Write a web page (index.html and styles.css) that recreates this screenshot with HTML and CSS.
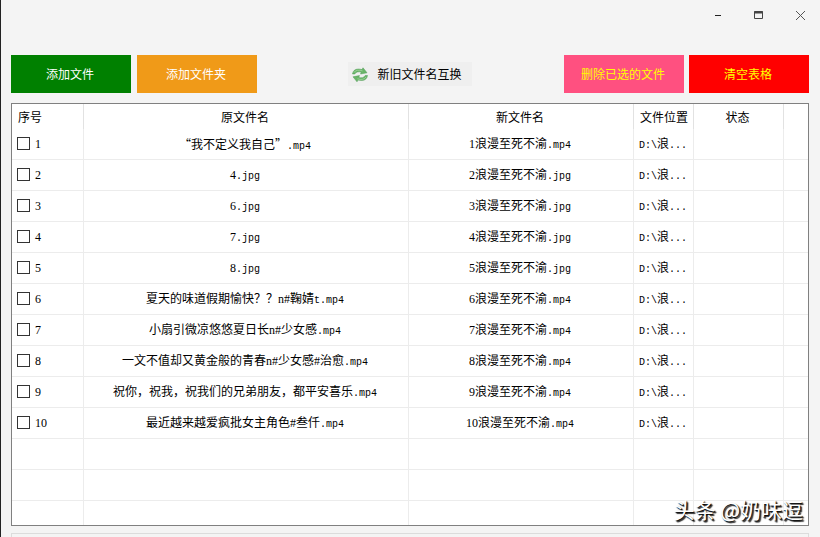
FILE: index.html
```html
<!DOCTYPE html>
<html lang="zh-CN">
<head>
    <meta charset="UTF-8">
    <meta name="viewport" content="width=device-width, initial-scale=1.0">
    <title>文件改名</title>
    <link rel="stylesheet" href="styles.css">
</head>
<body>
    <header class="titlebar">
        <button class="titlebar__boton" aria-label="最小化">
            <svg width="12" height="12" viewBox="0 0 12 12"><path d="M3 5.5h6" stroke="#222" fill="none"/></svg>
        </button>
        <button class="titlebar__boton" aria-label="最大化">
            <svg width="12" height="12" viewBox="0 0 12 12"><path d="M1.500 1.500h8v7h-8z" stroke="#444" fill="none"/><path d="M1 2.500h9" stroke="#444" stroke-width="2"/></svg>
        </button>
        <button class="titlebar__boton" aria-label="关闭">
            <svg width="12" height="12" viewBox="0 0 12 12"><path d="M2 1l9 9M11 1l-9 9" stroke="#555" fill="none"/></svg>
        </button>
    </header>
    <main class="contenido">
        <nav class="toolbar">
            <div class="toolbar__grupo">
                <button class="boton boton--verde">添加文件</button>
                <button class="boton boton--naranja">添加文件夹</button>
            </div>
            <button class="swap">
                <svg width="18" height="16" viewBox="0 0 18 16">
                    <g fill="#69b568" stroke="#4f9a55" stroke-width="0.5" stroke-linejoin="round">
                        <path d="M1.500 7C2 3 5.500 1 11 2.600L12 .8L16 5.800L9.500 7L10.300 5.200C7.500 4.300 5 4.800 3.800 7z"/>
                        <path d="M16.500 8.500C16 12.500 12.500 14.500 7 13L6 14.800L2 9.800L8.500 8.600L7.700 10.400C10.500 11.300 13 10.800 14.200 8.500z"/>
                    </g>
                    <path d="M3 5.500C4.500 3 8 2.600 11.500 3.900M15 10C13.500 12.600 10 13 6.500 11.800" stroke="#a4d6a0" stroke-width="0.8" fill="none"/>
                </svg>
                新旧文件名互换
            </button>
            <div class="toolbar__grupo toolbar__grupo--derecha">
                <button class="boton boton--rosa">删除已选的文件</button>
                <button class="boton boton--rojo">清空表格</button>
            </div>
        </nav>
        <table class="tabla">
            <colgroup>
                <col class="col-num">
                <col>
                <col class="col-nuevo">
                <col class="col-ruta">
                <col class="col-estado">
                <col class="col-resto">
            </colgroup>
            <thead>
                <tr><th class="izq">序号</th><th>原文件名</th><th>新文件名</th><th class="izq">文件位置</th><th>状态</th><th></th></tr>
            </thead>
            <tbody>
                <tr><td><label class="fila"><input type="checkbox">1</label></td><td><span class="comilla">“</span>我不定义我自己<span class="comilla">”</span><span class="mono">.mp4</span></td><td>1浪漫至死不渝<span class="mono">.mp4</span></td><td class="ruta"><span class="mono">D:\</span>浪<span class="mono">...</span></td><td></td><td></td></tr>
                <tr><td><label class="fila"><input type="checkbox">2</label></td><td>4<span class="mono">.jpg</span></td><td>2浪漫至死不渝<span class="mono">.jpg</span></td><td class="ruta"><span class="mono">D:\</span>浪<span class="mono">...</span></td><td></td><td></td></tr>
                <tr><td><label class="fila"><input type="checkbox">3</label></td><td>6<span class="mono">.jpg</span></td><td>3浪漫至死不渝<span class="mono">.jpg</span></td><td class="ruta"><span class="mono">D:\</span>浪<span class="mono">...</span></td><td></td><td></td></tr>
                <tr><td><label class="fila"><input type="checkbox">4</label></td><td>7<span class="mono">.jpg</span></td><td>4浪漫至死不渝<span class="mono">.jpg</span></td><td class="ruta"><span class="mono">D:\</span>浪<span class="mono">...</span></td><td></td><td></td></tr>
                <tr><td><label class="fila"><input type="checkbox">5</label></td><td>8<span class="mono">.jpg</span></td><td>5浪漫至死不渝<span class="mono">.jpg</span></td><td class="ruta"><span class="mono">D:\</span>浪<span class="mono">...</span></td><td></td><td></td></tr>
                <tr><td><label class="fila"><input type="checkbox">6</label></td><td>夏天的味道假期愉快？？n#鞠婧<span class="mono">t.mp4</span></td><td>6浪漫至死不渝<span class="mono">.mp4</span></td><td class="ruta"><span class="mono">D:\</span>浪<span class="mono">...</span></td><td></td><td></td></tr>
                <tr><td><label class="fila"><input type="checkbox">7</label></td><td>小扇引微凉悠悠夏日长n#少女感<span class="mono">.mp4</span></td><td>7浪漫至死不渝<span class="mono">.mp4</span></td><td class="ruta"><span class="mono">D:\</span>浪<span class="mono">...</span></td><td></td><td></td></tr>
                <tr><td><label class="fila"><input type="checkbox">8</label></td><td>一文不值却又黄金般的青春n#少女感#治愈<span class="mono">.mp4</span></td><td>8浪漫至死不渝<span class="mono">.mp4</span></td><td class="ruta"><span class="mono">D:\</span>浪<span class="mono">...</span></td><td></td><td></td></tr>
                <tr><td><label class="fila"><input type="checkbox">9</label></td><td>祝你，祝我，祝我们的兄弟朋友，都平安喜乐<span class="mono">.mp4</span></td><td>9浪漫至死不渝<span class="mono">.mp4</span></td><td class="ruta"><span class="mono">D:\</span>浪<span class="mono">...</span></td><td></td><td></td></tr>
                <tr><td><label class="fila"><input type="checkbox">10</label></td><td>最近越来越爱疯批女主角色#叁仟<span class="mono">.mp4</span></td><td>10浪漫至死不渝<span class="mono">.mp4</span></td><td class="ruta"><span class="mono">D:\</span>浪<span class="mono">...</span></td><td></td><td></td></tr>
                <tr><td></td><td></td><td></td><td></td><td></td><td></td></tr>
                <tr><td></td><td></td><td></td><td></td><td></td><td></td></tr>
                <tr class="ultima"><td></td><td></td><td></td><td></td><td></td><td></td></tr>
            </tbody>
        </table>
        <section class="panel"></section>
    </main>
    <div class="marca">头条 @奶味逗</div>
</body>
</html>
```
FILE: styles.css
```css
* {
    box-sizing: border-box;
}
body {
    margin: 0;
    height: 100vh;
    overflow: hidden;
    position: relative;
    display: flex;
    flex-direction: column;
    background-color: #f4f4f4;
    border-left: 1px solid #222;
    font-family: "Liberation Serif", "Noto Sans CJK SC", serif;
    font-size: 12px;
    line-height: 18px;
    color: #000;
}
button {
    font: inherit;
    border: none;
    padding: 0;
    cursor: pointer;
}
.titlebar {
    display: flex;
    justify-content: flex-end;
    height: 31px;
}
.titlebar__boton {
    width: 41px;
    background: none;
    display: flex;
    align-items: center;
    justify-content: center;
}
.contenido {
    flex: 1;
    display: flex;
    flex-direction: column;
    padding: 24px 11px 0 10px;
}
.toolbar {
    display: grid;
    grid-template-columns: 1fr auto 1fr;
    align-items: center;
    margin-bottom: 10px;
}
.toolbar__grupo {
    display: flex;
    gap: 6px;
}
.toolbar__grupo--derecha {
    justify-content: flex-end;
    gap: 5px;
}
.boton {
    width: 120px;
    height: 38px;
    padding: 2px 2px 0 0;
    color: #fff;
}
.boton--verde {
    background-color: #008000;
}
.boton--naranja {
    background-color: #f09a18;
}
.boton--rosa {
    background-color: #ff5080;
    color: #ff0;
}
.boton--rojo {
    background-color: #f00;
    color: #ff0;
}
.swap {
    display: flex;
    align-items: center;
    gap: 8px;
    height: 24px;
    padding: 1px 10px 0 3px;
    background-color: #efefef;
}
.tabla {
    width: 100%;
    table-layout: fixed;
    border-collapse: separate;
    border-spacing: 0;
    border: 1px solid #808080;
    background-color: #fff;
    text-align: center;
}
.col-num {
    width: 72px;
}
.col-nuevo {
    width: 225px;
}
.col-ruta {
    width: 60px;
}
.col-estado {
    width: 90px;
}
.col-resto {
    width: 24px;
}
.tabla th {
    height: 25px;
    padding: 2px 2px 0 0;
    font-weight: normal;
    border-right: 1px solid #e2e2e2;
}
.tabla .izq {
    text-align: left;
    padding-left: 6px;
    white-space: nowrap;
}
.tabla td {
    height: 31px;
    padding: 2px 2px 0 0;
    border-right: 1px solid #ececec;
    border-bottom: 1px solid #ececec;
    white-space: nowrap;
}
.tabla td:first-child {
    padding-top: 0;
}
.tabla th:last-child,
.tabla td:last-child {
    border-right: none;
}
.tabla .ultima td {
    height: 24px;
    border-bottom: none;
}
.tabla .ruta {
    text-align: left;
    padding-left: 5px;
}
.fila {
    display: flex;
    align-items: center;
    gap: 5px;
    padding-left: 5px;
}
.fila input {
    appearance: none;
    width: 13px;
    height: 13px;
    margin: 0 0 1px;
    border: 1px solid #333;
    background-color: #fff;
}
.comilla {
    font-family: "Noto Sans CJK SC", sans-serif;
}
.mono {
    font-family: "Liberation Mono", monospace;
    font-size: 10px;
}
.panel {
    flex: 1;
    margin-top: 7px;
    border: 1px solid #dcdcdc;
    border-bottom: none;
}
/* marca de agua encima de la tabla */
.marca {
    position: absolute;
    right: 17px;
    bottom: 13px;
    font-family: "Noto Sans CJK SC", sans-serif;
    font-size: 21px;
    line-height: 30px;
    color: #fff;
    text-shadow: 1px 1px 1px #000, 2px 2px 1px #333;
}
```
